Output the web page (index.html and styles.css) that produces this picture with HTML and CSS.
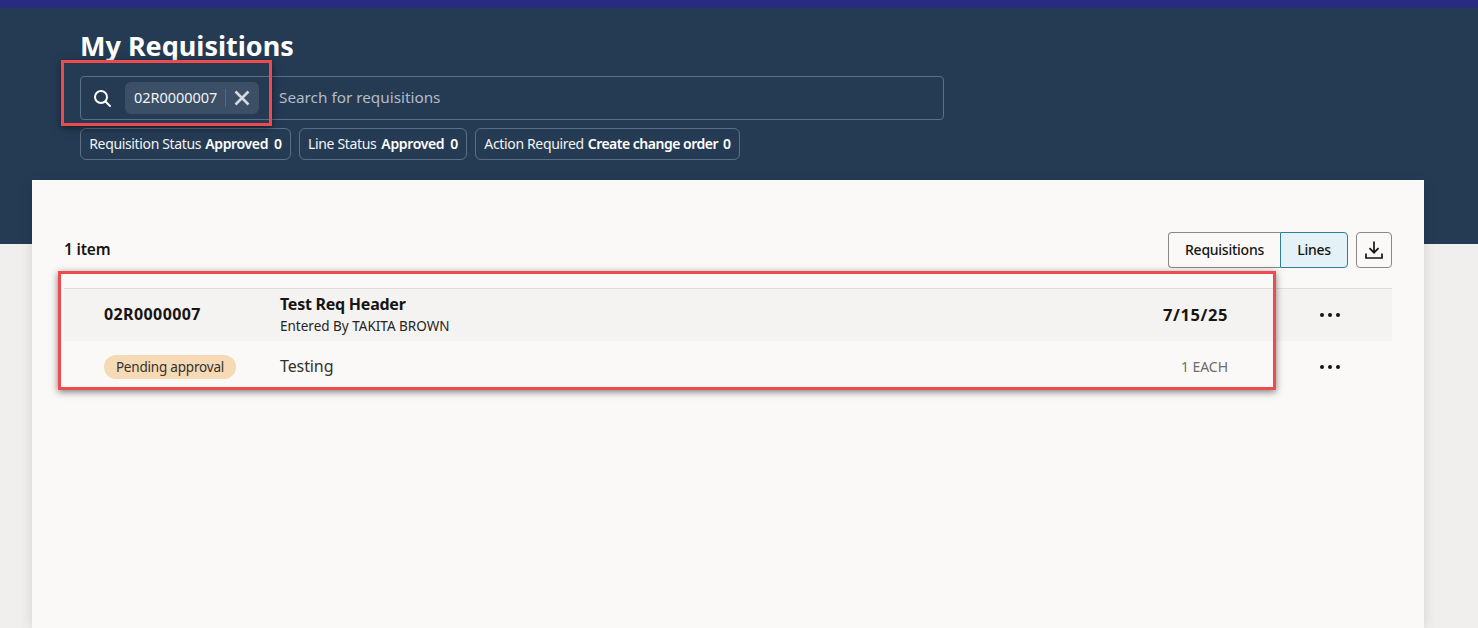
FILE: index.html
```html
<!DOCTYPE html>
<html lang="en">
<head>
<meta charset="utf-8">
<title>My Requisitions</title>
<link rel="stylesheet" href="styles.css">
</head>
<body>
<div class="stripe"></div>
<header class="hero">
  <h1 class="title">My Requisitions</h1>
  <div class="search">
    <svg class="search-icon" width="20" height="20" viewBox="0 0 20 20" fill="none" stroke="#fff" stroke-width="2" stroke-linecap="round"><circle cx="9" cy="9" r="6"/><path d="M13.5 13.5L18 18"/></svg>
    <span class="token">
      <span class="token-text">02R0000007</span>
      <span class="token-sep"></span>
      <svg class="token-x" width="16" height="16" viewBox="0 0 16 16" fill="none" stroke="#d5d9de" stroke-width="2.6"><path d="M1.5 1.5L14.5 14.5M14.5 1.5L1.5 14.5"/></svg>
    </span>
    <span class="placeholder">Search for requisitions</span>
  </div>
  <div class="chips">
    <span class="chip chip-req">Requisition Status <b>Approved</b> <b class="count">0</b></span>
    <span class="chip chip-line">Line Status <b>Approved</b> <b class="count">0</b></span>
    <span class="chip chip-action">Action Required <b class="tight">Create change order</b> <b class="count">0</b></span>
  </div>
</header>
<main class="card">
  <div class="toolbar">
    <span class="items">1 item</span>
    <div class="actions">
      <div class="toggle">
        <span class="toggle-btn">Requisitions</span>
        <span class="toggle-btn selected">Lines</span>
      </div>
      <button class="icon-btn" type="button" aria-label="Download">
        <svg width="20" height="20" viewBox="0 0 20 20" fill="none" stroke="#161513" stroke-width="1.7"><path d="M10 1.5V12.5M5.5 8.2L10 12.7L14.5 8.2"/><path d="M2 13.5V18H18V13.5"/></svg>
      </button>
    </div>
  </div>
  <div class="list">
    <div class="row row-head">
      <span class="req-no">02R0000007</span>
      <div class="desc">
        <span class="desc-title">Test Req Header</span>
        <span class="desc-sub">Entered By TAKITA BROWN</span>
      </div>
      <span class="date">7/15/25</span>
      <span class="more"><i></i><i></i><i></i></span>
    </div>
    <div class="row">
      <span class="badge-cell"><span class="badge">Pending approval</span></span>
      <span class="line-desc">Testing</span>
      <span class="qty">1 EACH</span>
      <span class="more"><i></i><i></i><i></i></span>
    </div>
  </div>
</main>
<div class="mark mark-search"></div>
<div class="mark mark-row"></div>
</body>
</html>
```

FILE: styles.css
```css
* { box-sizing: border-box; }
body {
  margin: 0;
  height: 628px;
  overflow: hidden;
  position: relative;
  background: #f1efed;
  font-family: "Noto Sans", "Open Sans", sans-serif;
  color: #161513;
}
.stripe { height: 8px; background: #272c80; }
.hero {
  height: 236px;
  background: #253b54;
  padding: 20px 0 0 80px;
  color: #fff;
}
.title {
  margin: 0;
  height: 48px;
  font-size: 27px;
  line-height: 36px;
  font-weight: 700;
}
.search {
  width: 864px;
  height: 44px;
  border: 1px solid #5c7085;
  border-radius: 4px;
  display: flex;
  align-items: center;
  padding-left: 11px;
}
.search-icon { flex: none; }
.token {
  margin-left: 13px;
  height: 32px;
  width: 134px;
  flex: none;
  background: #3b4f66;
  border-radius: 6px;
  display: flex;
  align-items: center;
  padding: 0 0 2px 9px;
}
.token-text { font-size: 14.5px; color: #f2f3f5; width: 91px; white-space: nowrap; letter-spacing: -0.05px; }
.token-sep { width: 1px; height: 18px; margin-top: 2px; background: #55687d; }
.token-x { margin: 2px 0 0 8px; }
.placeholder { margin: 0 0 2px 20px; font-size: 15.3px; color: #b4bcc6; }
.chips { display: flex; gap: 8px; margin-top: 8px; }
.chip {
  height: 32px;
  padding: 0 0 2px;
  border: 1px solid #5c7085;
  border-radius: 6px;
  display: flex;
  align-items: center;
  justify-content: center;
  gap: 4px;
  font-size: 14px;
  letter-spacing: -0.35px;
  white-space: nowrap;
  color: #f2f3f5;
}
.chip-req { width: 211px; }
.chip-line { width: 168px; gap: 5px; }
.chip-action { width: 265px; }
.chip b { font-weight: 600; color: #fff; }
.chip .tight { letter-spacing: -0.5px; }
.chip .count { margin-left: 1px; }
.chip-req .count { margin-left: 2px; }
.card {
  position: relative;
  margin: -64px 54px 0 32px;
  height: 448px;
  background: #fbf9f8;
  padding: 52px 32px 0;
  box-shadow: 0 2px 12px rgba(0, 0, 0, 0.12);
}
.toolbar { display: flex; justify-content: space-between; align-items: center; height: 36px; }
.items { font-size: 15.5px; font-weight: 600; letter-spacing: -0.2px; margin-bottom: 2px; }
.actions { display: flex; gap: 8px; }
.toggle { display: flex; height: 36px; }
.toggle-btn {
  height: 36px;
  padding-bottom: 2px;
  display: flex;
  align-items: center;
  justify-content: center;
  font-size: 14px;
  font-weight: 500;
  letter-spacing: -0.25px;
  border: 1px solid #8a8886;
}
.toggle-btn:first-child {
  width: 112px;
  border-right: 0;
  border-radius: 4px 0 0 4px;
}
.toggle-btn.selected {
  width: 68px;
  background: #e4f1f7;
  border-color: #2f7f96;
  border-radius: 0 4px 4px 0;
}
.icon-btn {
  width: 36px;
  height: 36px;
  padding: 0;
  background: transparent;
  border: 1px solid #8a8886;
  border-radius: 4px;
  display: flex;
  align-items: center;
  justify-content: center;
}
.list { margin-top: 20px; border-top: 1px solid #dfdcd8; }
.row {
  display: grid;
  grid-template-columns: 176px 1fr auto 164px;
  align-items: center;
  height: 52px;
  padding-left: 40px;
}
.row-head { background: #f5f3f1; }
.req-no { font-size: 16px; font-weight: 700; letter-spacing: 0.4px; padding-bottom: 2px; }
.desc { display: flex; flex-direction: column; padding-bottom: 1px; }
.desc-title { font-size: 16px; font-weight: 700; line-height: 22px; letter-spacing: -0.25px; }
.desc-sub { font-size: 13.5px; line-height: 22px; color: #262421; }
.date { font-size: 16.5px; font-weight: 700; letter-spacing: 0.6px; padding-bottom: 2px; }
.line-desc { font-size: 16px; color: #33312e; letter-spacing: -0.1px; padding-bottom: 3px; }
.qty { font-size: 14px; color: #6f6c68; letter-spacing: -0.05px; padding-bottom: 1px; }
.badge-cell { display: flex; }
.badge {
  height: 24px;
  width: 132px;
  text-align: center;
  border-radius: 12px;
  background: #f6d9b5;
  font-size: 13.5px;
  line-height: 24px;
  letter-spacing: -0.2px;
  color: #33312e;
}
.more { margin-left: 40px; display: flex; justify-content: center; gap: 4px; }
.more i { width: 4px; height: 4px; border-radius: 50%; background: #161513; display: block; }
.mark {
  position: absolute;
  border: 3px solid #ef4b4f;
  box-shadow: 0 2px 7px rgba(0, 0, 0, 0.5);
  pointer-events: none;
}
.mark-search { left: 61px; top: 60px; width: 211px; height: 66px; }
.mark-row { left: 58px; top: 271px; width: 1218px; height: 119px; }
```
